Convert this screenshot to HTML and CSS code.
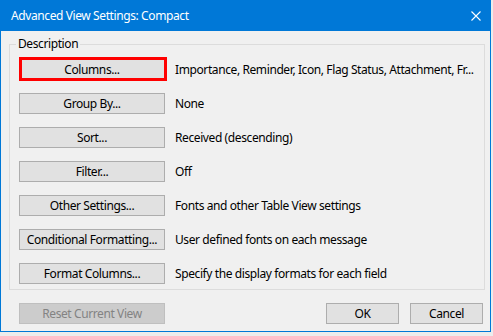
FILE: index.html
```html
<!DOCTYPE html>
<html lang="en">
<head>
    <meta charset="UTF-8">
    <title>Advanced View Settings: Compact</title>
    <link rel="stylesheet" href="styles.css">
</head>
<body>
    <div class="window">
        <div class="titlebar">
            <span class="title">Advanced View Settings: Compact</span>
            <span class="close">
                <svg width="10" height="10" viewBox="0 0 10 10"><path d="M0.5 0.5L9.5 9.5M9.5 0.5L0.5 9.5" stroke="#fff" stroke-width="1.1" fill="none"/></svg>
            </span>
        </div>
        <div class="content">
            <fieldset class="group">
                <legend>Description</legend>
                <div class="row">
                    <button class="btn focused">Columns...<span class="highlight"></span></button>
                    <span class="desc">Importance, Reminder, Icon, Flag Status, Attachment, Fr...</span>
                </div>
                <div class="row">
                    <button class="btn">Group By...</button>
                    <span class="desc">None</span>
                </div>
                <div class="row">
                    <button class="btn">Sort...</button>
                    <span class="desc">Received (descending)</span>
                </div>
                <div class="row">
                    <button class="btn">Filter...</button>
                    <span class="desc">Off</span>
                </div>
                <div class="row">
                    <button class="btn">Other Settings...</button>
                    <span class="desc">Fonts and other Table View settings</span>
                </div>
                <div class="row">
                    <button class="btn">Conditional Formatting...</button>
                    <span class="desc">User defined fonts on each message</span>
                </div>
                <div class="row">
                    <button class="btn">Format Columns...</button>
                    <span class="desc">Specify the display formats for each field</span>
                </div>
            </fieldset>
            <div class="footer">
                <button class="btn" disabled>Reset Current View</button>
                <div class="actions">
                    <button class="btn small">OK</button>
                    <button class="btn small">Cancel</button>
                </div>
            </div>
        </div>
    </div>
</body>
</html>
```
FILE: styles.css
```css
body {
    margin: 0;
    background-color: #ececec;
    font-family: 'Noto Sans', 'Liberation Sans', sans-serif;
    font-size: 12px;
    letter-spacing: -0.4px;
    color: #000;
}
.window {
    width: 491px;
    height: 332px;
    box-sizing: border-box;
    border: 1px solid #0078d7;
    border-top: none;
    background-color: #f0f0f0;
    display: flex;
    flex-direction: column;
}
.titlebar {
    height: 31px;
    background-color: #0078d7;
    color: #fff;
    display: flex;
    align-items: center;
    justify-content: space-between;
    padding: 0 10px 0 10px;
}
.close {
    display: flex;
    margin-right: -1px;
}
.content {
    flex: 1;
    display: flex;
    flex-direction: column;
}
.group {
    margin: 5px 5px 0 8px;
    padding: 7px 0 5px 9px;
    border: 1px solid #dcdcdc;
    display: flex;
    flex-direction: column;
    gap: 13px;
}
.group legend {
    margin-left: -3px;
    padding: 0 2px;
    line-height: 16px;
}
.row {
    display: flex;
    align-items: center;
    gap: 10px;
}
.btn {
    width: 146px;
    height: 21px;
    padding: 0;
    font: inherit;
    letter-spacing: inherit;
    color: #000;
    background-color: #e1e1e1;
    border: 1px solid #adadad;
    position: relative;
}
.btn.focused {
    border-color: #0078d7;
}
.btn:disabled {
    background-color: #cccccc;
    border-color: #bfbfbf;
    color: #838383;
}
.highlight {
    position: absolute;
    left: -1px;
    top: -3px;
    width: 148px;
    height: 24px;
    box-sizing: border-box;
    border: 3px solid #ff0000;
}
.desc {
    white-space: nowrap;
}
.footer {
    display: flex;
    justify-content: space-between;
    padding: 13px 7px 0 18px;
}
.actions {
    display: flex;
    gap: 11px;
}
.btn.small {
    width: 73px;
}
```
